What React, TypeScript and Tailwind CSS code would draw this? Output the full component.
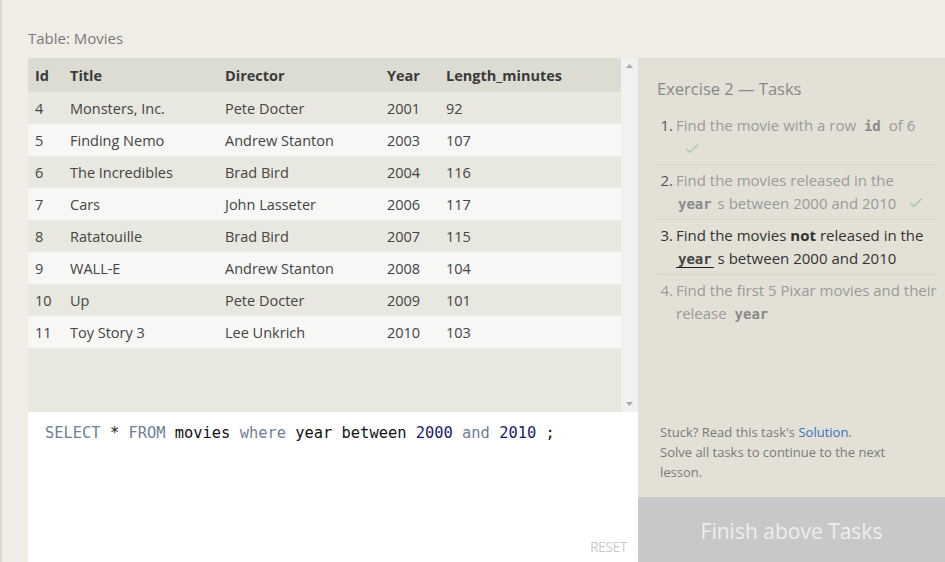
import { Check } from 'lucide-react'

const movies = [
  [4, 'Monsters, Inc.', 'Pete Docter', 2001, 92],
  [5, 'Finding Nemo', 'Andrew Stanton', 2003, 107],
  [6, 'The Incredibles', 'Brad Bird', 2004, 116],
  [7, 'Cars', 'John Lasseter', 2006, 117],
  [8, 'Ratatouille', 'Brad Bird', 2007, 115],
  [9, 'WALL-E', 'Andrew Stanton', 2008, 104],
  [10, 'Up', 'Pete Docter', 2009, 101],
  [11, 'Toy Story 3', 'Lee Unkrich', 2010, 103],
]

const sans = { fontFamily: '"Open Sans", "Noto Sans", sans-serif' }
const mono = { fontFamily: '"DejaVu Sans Mono", "Liberation Mono", monospace' }

function Done() {
  return <Check size={16} strokeWidth={1.75} className="inline-block text-[#97c997] ml-2 -mt-1" />
}

export default function App() {
  return (
    <div className="h-[562px] w-full bg-[#efede6] border-l-2 border-[#dcdad3] flex flex-col overflow-hidden" style={sans}>
      {/* Title */}
      <div className="h-[58px] flex items-end pb-[9px] pl-[26px] text-[15px] text-[#7a7a7a]">Table: Movies</div>

      <div className="flex flex-1 min-h-0">
        {/* ── Left: table + editor ── */}
        <div className="ml-[26px] w-[610px] flex flex-col">
          <div className="h-[354px] flex bg-[#e8e7e0]">
            <div className="w-[593px]">
              <table className="w-full border-collapse text-[14.5px] text-[#444]">
                <thead>
                  <tr className="h-[34px] bg-[#dcdcd2] text-left text-[#3a3a3a]">
                    <th className="w-[35px] pl-[7px] pt-[1px] font-bold">Id</th>
                    <th className="w-[155px] pl-[7px] pt-[1px] font-bold">Title</th>
                    <th className="w-[162px] pl-[7px] pt-[1px] font-bold">Director</th>
                    <th className="w-[59px] pl-[7px] pt-[1px] font-bold">Year</th>
                    <th className="pl-[7px] pt-[1px] font-bold">Length_minutes</th>
                  </tr>
                </thead>
                <tbody>
                  {movies.map((m, i) => (
                    <tr key={m[0]} className={`h-[32px] ${i % 2 === 0 ? 'bg-[#e8e7e0]' : 'bg-[#f7f7f5]'}`}>
                      {m.map((c, j) => (
                        <td key={j} className="pl-[7px] pt-[1px]">{c}</td>
                      ))}
                    </tr>
                  ))}
                </tbody>
              </table>
            </div>
            {/* Scrollbar */}
            <div className="w-[17px] bg-[#f1f1f1] flex flex-col items-center justify-between py-[6px] text-[#a8a8a8]">
              <svg width="7" height="4" viewBox="0 0 7 4"><path d="M0 4 L3.5 0 L7 4 Z" fill="currentColor" /></svg>
              <svg width="7" height="4" viewBox="0 0 7 4"><path d="M0 0 L3.5 4 L7 0 Z" fill="currentColor" /></svg>
            </div>
          </div>

          {/* Editor */}
          <div className="flex-1 bg-white relative">
            <div className="pt-[10px] pl-[17px] text-[15.4px] leading-[22px] whitespace-pre" style={mono}>
              <span className="text-[#708090]">SELECT</span>
              <span className="text-[#222]"> * </span>
              <span className="text-[#708090]">FROM</span>
              <span className="text-[#111]"> movies </span>
              <span className="text-[#708090]">where</span>
              <span className="text-[#111]"> year between </span>
              <span className="text-[#1a1a6c]">2000</span>
              <span className="text-[#708090]"> and </span>
              <span className="text-[#1a1a6c]">2010</span>
              <span className="text-[#111]"> ;</span>
            </div>
            <span className="absolute right-[11px] bottom-[5px] text-[14px] text-[#cccccc] tracking-[-0.5px]">RESET</span>
          </div>
        </div>

        {/* ── Right: tasks ── */}
        <div className="w-[307px] flex flex-col">
          <div className="flex-1 bg-[#e3e1d6] pl-[19px] pr-[7px] pt-[19px] flex flex-col">
            <h3 className="text-[16.5px] text-[#888] mb-[12px]">Exercise 2 — Tasks</h3>
            <ol className="text-[15px] leading-[23px] whitespace-nowrap">
              <li className="flex pb-[3px] border-b border-[#d8d6cb]">
                <span className="w-[19px] text-right pr-[3px] text-[#555]">1.</span>
                <span className="flex-1 text-[#9a9a9a]">
                  Find the movie with a row <b className="text-[#8a8a8a] px-[4px] text-[14px]" style={mono}>id</b> of 6
                  <br /><Done />
                </span>
              </li>
              <li className="flex pt-[4px] pb-[3px] border-b border-[#d8d6cb]">
                <span className="w-[19px] text-right pr-[3px] text-[#555]">2.</span>
                <span className="flex-1 text-[#9a9a9a]">
                  Find the movies released in the
                  <br />
                  <b className="text-[#8a8a8a] text-[14px] px-[2px]" style={mono}>year</b> s between 2000 and 2010 <Done />
                </span>
              </li>
              <li className="flex pt-[4px] pb-[3px] border-b border-[#d8d6cb]">
                <span className="w-[19px] text-right pr-[3px] text-[#333]">3.</span>
                <span className="flex-1 text-[#333]">
                  Find the movies <b>not</b> released in the
                  <br />
                  <b className="text-[#444] text-[14px] px-[2px] border-b-[1.5px] border-[#222]" style={mono}>year</b> s between 2000 and 2010
                </span>
              </li>
              <li className="flex pt-[4px]">
                <span className="w-[19px] text-right pr-[3px] text-[#9a9a9a]">4.</span>
                <span className="flex-1 text-[#9a9a9a]">
                  Find the first 5 Pixar movies and their
                  <br />
                  release <b className="text-[#8a8a8a] text-[14px] px-[4px]" style={mono}>year</b>
                </span>
              </li>
            </ol>
            <div className="mt-auto pb-[15px] pl-[3px] text-[13px] leading-[20px] text-[#7a7a7a]">
              Stuck? Read this task's <span className="text-[#3b6dc4]">Solution</span>.
              <br />
              Solve all tasks to continue to the next
              <br />
              lesson.
            </div>
          </div>
          <div className="h-[65px] bg-[#c8c8c8] flex items-center justify-center pt-[5px] text-[21px] text-[#eeeeee]">
            Finish above Tasks
          </div>
        </div>
      </div>
    </div>
  )
}
